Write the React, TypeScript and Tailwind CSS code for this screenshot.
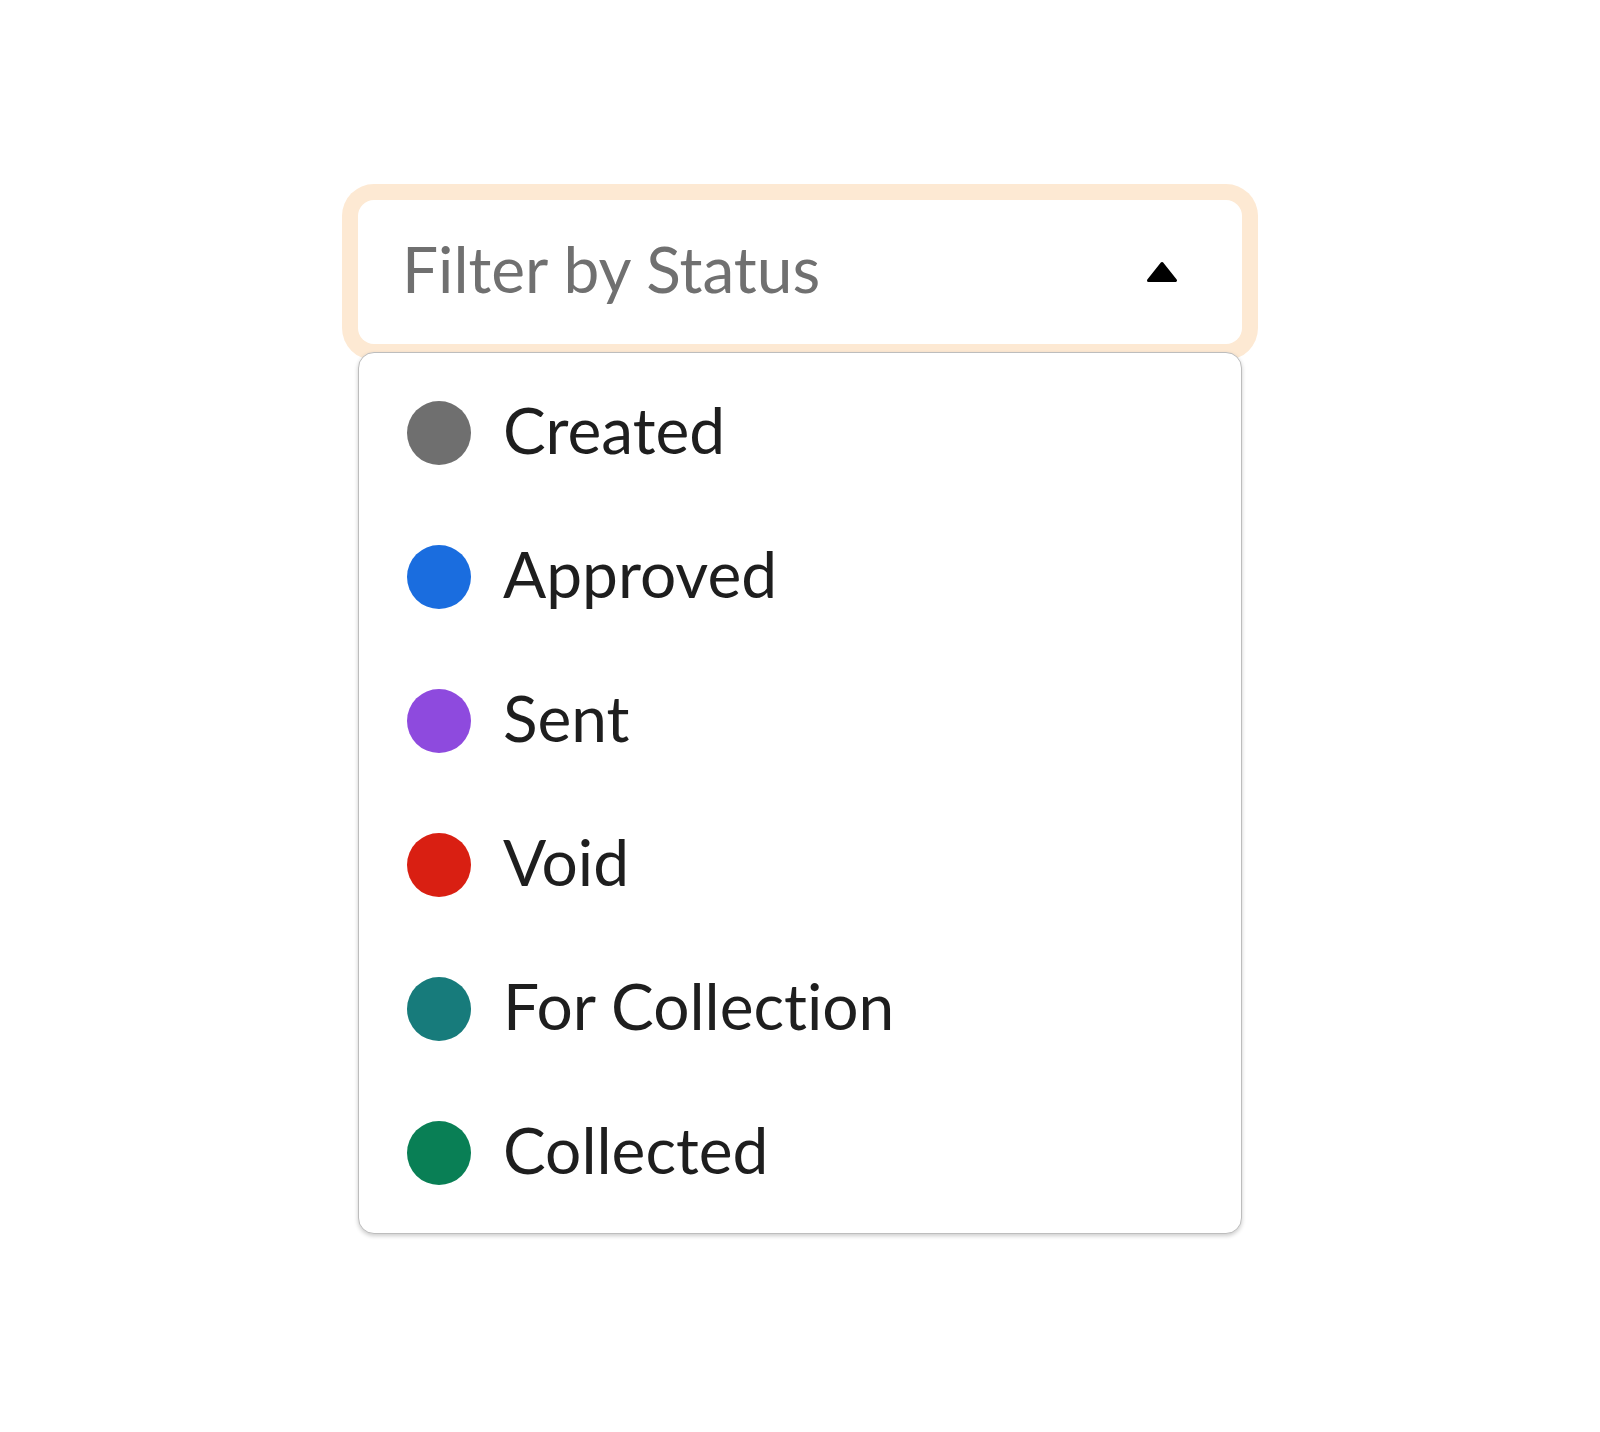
import React from "react";

const items: { label: string; color: string }[] = [
  { label: "Created", color: "bg-[#6f6f6f]" },
  { label: "Approved", color: "bg-[#1a6ddf]" },
  { label: "Sent", color: "bg-[#8e4ade]" },
  { label: "Void", color: "bg-[#d91f12]" },
  { label: "For Collection", color: "bg-[#177b7b]" },
  { label: "Collected", color: "bg-[#097f55]" },
];

export default function App() {
  return (
    <div className="min-h-screen w-full bg-white font-['Lato',sans-serif] font-normal [font-variant-ligatures:none]">
      <div className="flex flex-col items-center pt-[200px]">
        <div className="w-[884px]">
          <div className="flex h-[144px] items-center justify-between rounded-2xl bg-white pl-11 pr-16 shadow-[0_0_0_16px_#fde9d3]">
            <span className="pb-[6px] text-[64px] leading-none text-[#707070]">Filter by Status</span>
            <svg width="32" height="22" viewBox="0 0 32 22" aria-hidden="true">
              <polygon
                points="16,2.5 29.5,19.5 2.5,19.5"
                fill="#000"
                stroke="#000"
                strokeWidth="3"
                strokeLinejoin="round"
              />
            </svg>
          </div>
          <div className="relative mt-2 rounded-2xl border border-[#bdbdbd] bg-white py-2 shadow-[0_2px_4px_rgba(0,0,0,0.2)]">
            {items.map((it) => (
              <div key={it.label} className="flex h-[144px] items-center gap-8 pl-12">
                <span className={`h-16 w-16 shrink-0 rounded-full ${it.color}`} />
                <span className="pb-[6px] text-[64px] leading-none text-[#1e1e1e]">{it.label}</span>
              </div>
            ))}
          </div>
        </div>
      </div>
    </div>
  );
}
